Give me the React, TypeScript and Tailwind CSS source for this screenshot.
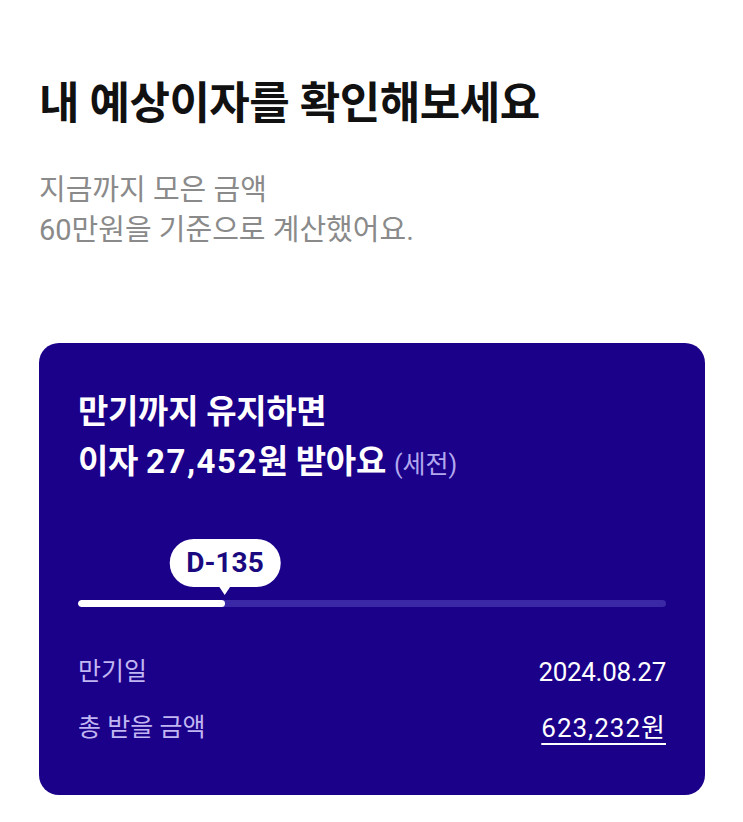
import React from 'react';

const font = { fontFamily: "Roboto, 'Noto Sans CJK KR', sans-serif" };

export default function App() {
  const progress = 25; // 퍼센트

  return (
    <div className="min-h-screen bg-white px-[39px] pt-[75px]" style={font}>
      {/* Header */}
      <h1 className="text-[44px] leading-[58px] font-bold text-[#111] tracking-[-0.5px]">
        내 예상이자를 확인해보세요
      </h1>
      <p className="mt-[37px] text-[29px] leading-[40px] text-[#8a8a8a]">
        지금까지 모은 금액
        <br />
        60만원을 기준으로 계산했어요.
      </p>

      {/* Card */}
      <div className="mt-[93px] w-[666px] rounded-[20px] bg-[#1b0089] px-[39px] pt-[44px] pb-[49px]">
        <div className="text-[33px] leading-[50px] font-bold text-white tracking-[-0.3px]">
          <div>만기까지 유지하면</div>
          <div>
            이자 <span className="tracking-[1.5px]">27,452</span>원 받아요{' '}
            <span className="text-[25px] font-normal text-[#b1a8ee] tracking-normal">(세전)</span>
          </div>
        </div>

        {/* Progress */}
        <div className="mt-[110px] relative">
          <div className="flex">
            <div className="relative" style={{ width: `${progress}%` }}>
              <div className="absolute right-0 bottom-[5px] translate-x-1/2 flex flex-col items-center">
                <div className="rounded-full bg-white px-[17px] h-[48px] flex items-center text-[28px] font-bold text-[#1b0a7f]">
                  D-135
                </div>
                <div className="w-0 h-0 border-l-[6px] border-r-[6px] border-t-[9px] border-l-transparent border-r-transparent border-t-white -mt-px" />
              </div>
            </div>
          </div>
          <div className="h-[7px] w-full rounded-full bg-[#3a28a6] overflow-hidden">
            <div className="h-full rounded-full bg-white" style={{ width: `${progress}%` }} />
          </div>
        </div>

        {/* Info */}
        <div className="mt-[47px] flex flex-col gap-[20px] leading-[36px]">
          <div className="flex justify-between">
            <span className="text-[25px] text-[#c0b6f2]">만기일</span>
            <span className="text-[26px] text-white tracking-[-0.3px]">2024.08.27</span>
          </div>
          <div className="flex justify-between">
            <span className="text-[25px] text-[#c0b6f2]">총 받을 금액</span>
            <span className="text-[26px] text-white underline underline-offset-[6px] decoration-[1.5px] tracking-[1px]">623,232원</span>
          </div>
        </div>
      </div>
    </div>
  );
}
